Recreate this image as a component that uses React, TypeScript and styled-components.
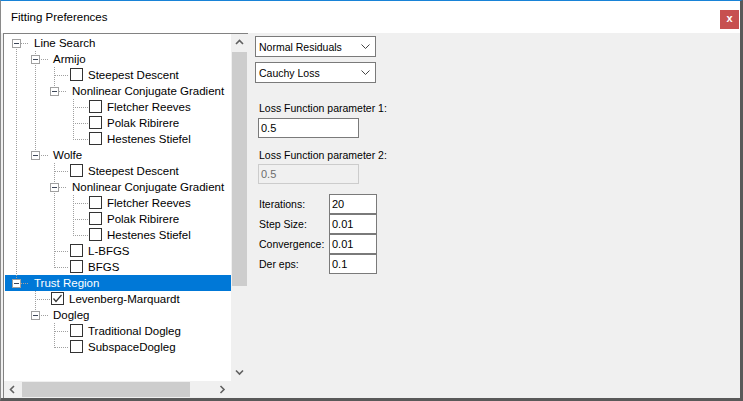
import React from "react";
import styled, { createGlobalStyle } from "styled-components";

const GlobalStyle = createGlobalStyle`
  html, body { margin: 0; padding: 0; background: #ffffff; }
  body { overflow: hidden; font-family: "Liberation Sans", Arial, sans-serif; }
`;

type TreeNode = {
  label: string;
  level: number;
  kind: "group" | "check";
  checked?: boolean;
  selected?: boolean;
};

const nodes: TreeNode[] = [
  { label: "Line Search", level: 0, kind: "group" },
  { label: "Armijo", level: 1, kind: "group" },
  { label: "Steepest Descent", level: 2, kind: "check" },
  { label: "Nonlinear Conjugate Gradient", level: 2, kind: "group" },
  { label: "Fletcher Reeves", level: 3, kind: "check" },
  { label: "Polak Ribirere", level: 3, kind: "check" },
  { label: "Hestenes Stiefel", level: 3, kind: "check" },
  { label: "Wolfe", level: 1, kind: "group" },
  { label: "Steepest Descent", level: 2, kind: "check" },
  { label: "Nonlinear Conjugate Gradient", level: 2, kind: "group" },
  { label: "Fletcher Reeves", level: 3, kind: "check" },
  { label: "Polak Ribirere", level: 3, kind: "check" },
  { label: "Hestenes Stiefel", level: 3, kind: "check" },
  { label: "L-BFGS", level: 2, kind: "check" },
  { label: "BFGS", level: 2, kind: "check" },
  { label: "Trust Region", level: 0, kind: "group", selected: true },
  { label: "Levenberg-Marquardt", level: 1, kind: "check", checked: true },
  { label: "Dogleg", level: 1, kind: "group" },
  { label: "Traditional Dogleg", level: 2, kind: "check" },
  { label: "SubspaceDogleg", level: 2, kind: "check" },
];

const ROW = 16;
const INDENT = 19;

const hasNext = nodes.map((n, i) => {
  for (let j = i + 1; j < nodes.length; j++) {
    if (nodes[j].level < n.level) return false;
    if (nodes[j].level === n.level) return true;
  }
  return false;
});

// dotted connector lines of the tree, one pixel per dot
function buildLines() {
  let d = "";
  const v = (x: number, y1: number, y2: number) => {
    for (let y = y1; y < y2; y++) if (y % 2 === 0) d += `M${x} ${y}h1v1h-1z`;
  };
  const h = (x1: number, x2: number, y: number) => {
    for (let x = x1; x < x2; x++) if (x % 2 === 0) d += `M${x} ${y}h1v1h-1z`;
  };
  nodes.forEach((n, i) => {
    const top = i * ROW;
    const mid = top + 8;
    const xc = 11 + INDENT * n.level;
    for (let k = 0; k < n.level; k++) {
      let a = i - 1;
      while (a >= 0 && nodes[a].level !== k) a--;
      if (a >= 0 && hasNext[a]) v(11 + INDENT * k, top, top + ROW);
    }
    if (n.kind === "group") {
      if (i > 0) v(xc, top, top + 4);
      if (hasNext[i]) v(xc, top + 13, top + ROW);
      h(xc + 5, xc + 13, mid);
    } else {
      v(xc, top, mid + 1);
      if (hasNext[i]) v(xc, mid, top + ROW);
      h(xc + 1, xc + 15, mid);
    }
  });
  return d;
}

const Window = styled.div`
  width: 743px;
  height: 401px;
  box-sizing: border-box;
  border-top: 1px solid #1883d7;
  border-left: 1px solid #8a8a8a;
  border-right: 3px solid #595959;
  border-bottom: 3px solid #595959;
  display: flex;
  flex-direction: column;
  background: #f0f0f0;
`;

const TitleBar = styled.div`
  height: 32px;
  flex: none;
  background: #ffffff;
  display: flex;
  align-items: center;
  justify-content: space-between;
  padding: 0 1px 0 10px;
`;

const Title = styled.span`
  font-size: 11.5px;
  color: #000000;
`;

const CloseButton = styled.div`
  align-self: flex-start;
  margin-top: 9px;
  width: 19px;
  height: 19px;
  background: #c75050;
  color: #ffffff;
  font-weight: bold;
  font-size: 11px;
  line-height: 17px;
  text-align: center;
`;

const Client = styled.div`
  flex: 1;
  display: flex;
  min-height: 0;
`;

const TreePanel = styled.div`
  margin-left: 2px;
  width: 245px;
  box-sizing: border-box;
  border-top: 1px solid #828282;
  border-left: 1px solid #828282;
  display: grid;
  grid-template-columns: 227px 17px;
  grid-template-rows: 347px 17px;
  background: #ffffff;
`;

const TreeContent = styled.div`
  position: relative;
  padding: 1px 0 0 1px;
  overflow: hidden;
  background: #ffffff;
`;

const Lines = styled.svg`
  position: absolute;
  left: 1px;
  top: 1px;
  pointer-events: none;
`;

const Row = styled.div<{ $indent: number; $selected?: boolean }>`
  height: ${ROW}px;
  display: flex;
  align-items: center;
  padding-left: ${(p) => p.$indent}px;
  background: ${(p) => (p.$selected ? "#0078d7" : "transparent")};
  color: ${(p) => (p.$selected ? "#ffffff" : "#000000")};
  font-size: 11.5px;
  white-space: nowrap;
`;

const Expander = styled.span`
  position: relative;
  align-self: flex-start;
  margin-top: 4px;
  margin-right: 13px;
  width: 9px;
  height: 9px;
  box-sizing: border-box;
  border: 1px solid #a0a0a0;
  background: #ffffff;
  flex: none;
  &::after {
    content: "";
    position: absolute;
    left: 1px;
    top: 3px;
    width: 5px;
    height: 1px;
    background: #3c4658;
  }
`;

const CheckBox = styled.span`
  align-self: flex-start;
  margin-top: 1px;
  margin-right: 5px;
  width: 13px;
  height: 13px;
  box-sizing: border-box;
  border: 1px solid #333333;
  background: #ffffff;
  flex: none;
  display: flex;
`;

const VScroll = styled.div`
  background: #f0f0f0;
  display: flex;
  flex-direction: column;
`;

const HScroll = styled.div`
  background: #f0f0f0;
  display: flex;
`;

const Corner = styled.div`
  background: #f0f0f0;
`;

const ScrollButton = styled.div`
  width: 17px;
  height: 17px;
  flex: none;
  display: flex;
  align-items: center;
  justify-content: center;
`;

const Spacer = styled.div`
  flex: 1;
`;

const VThumb = styled.div`
  margin: 1px 1px 0 1px;
  height: 234px;
  background: #cdcdcd;
`;

const HThumb = styled.div`
  margin: 1px 0 1px 1px;
  width: 168px;
  background: #cdcdcd;
`;

const RightPanel = styled.div`
  display: flex;
  flex-direction: column;
  align-items: flex-start;
  padding: 3px 0 0 7px;
  font-size: 10.5px;
  color: #000000;
`;

const Combo = styled.div<{ $mt: number }>`
  margin-top: ${(p) => p.$mt}px;
  width: 121px;
  height: 21px;
  box-sizing: border-box;
  border: 1px solid #7a7a7a;
  background: #ffffff;
  display: flex;
  align-items: center;
  justify-content: space-between;
  padding: 0 5px 0 3px;
`;

const Label = styled.div<{ $mt: number }>`
  margin-top: ${(p) => p.$mt}px;
  line-height: 13px;
  padding-left: 4px;
`;

const TextBox = styled.div<{ $mt?: number; $ml?: number; $width: number; $disabled?: boolean }>`
  margin-top: ${(p) => p.$mt ?? 0}px;
  margin-left: ${(p) => p.$ml ?? 0}px;
  width: ${(p) => p.$width}px;
  height: 20px;
  box-sizing: border-box;
  border: 1px solid ${(p) => (p.$disabled ? "#cccccc" : "#7a7a7a")};
  background: ${(p) => (p.$disabled ? "#f0f0f0" : "#ffffff")};
  color: ${(p) => (p.$disabled ? "#6d6d6d" : "#000000")};
  padding-left: 2px;
  display: flex;
  align-items: center;
  font-size: 11px;
`;

const ParamGrid = styled.div`
  margin-top: 10px;
  display: grid;
  grid-template-columns: 74px 48px;
  grid-auto-rows: 19px;
  row-gap: 1px;
`;

const GridLabel = styled.div`
  padding-left: 4px;
  display: flex;
  align-items: center;
`;

const Chevron = ({ dir }: { dir: "up" | "down" | "left" | "right" }) => {
  const pts = {
    up: "1,5 4.5,1.5 8,5",
    down: "1,1.5 4.5,5 8,1.5",
    left: "5,1 1.5,4.5 5,8",
    right: "1.5,1 5,4.5 1.5,8",
  }[dir];
  const vertical = dir === "up" || dir === "down";
  return (
    <svg width={vertical ? 9 : 7} height={vertical ? 7 : 9}>
      <polyline points={pts} fill="none" stroke="#606060" strokeWidth={1.6} />
    </svg>
  );
};

const ComboArrow = () => (
  <svg width="9" height="5">
    <polyline points="0.5,0.5 4.5,4.5 8.5,0.5" fill="none" stroke="#444444" strokeWidth={1} />
  </svg>
);

const CheckMark = () => (
  <svg width="11" height="11">
    <polyline points="1.5,5.5 4,8.5 9.5,2" fill="none" stroke="#333333" strokeWidth={1.2} />
  </svg>
);

export default function App() {
  const lines = buildLines();
  return (
    <>
      <GlobalStyle />
      <Window>
        <TitleBar>
          <Title>Fitting Preferences</Title>
          <CloseButton>x</CloseButton>
        </TitleBar>
        <Client>
          <TreePanel>
            <TreeContent>
              {nodes.map((n, i) => (
                <Row
                  key={i}
                  $indent={(n.kind === "group" ? 7 : 27) + INDENT * n.level}
                  $selected={n.selected}
                >
                  {n.kind === "group" ? (
                    <Expander />
                  ) : (
                    <CheckBox>{n.checked && <CheckMark />}</CheckBox>
                  )}
                  {n.label}
                </Row>
              ))}
              <Lines width={226} height={346}>
                <path d={lines} fill="#a0a0a0" />
              </Lines>
            </TreeContent>
            <VScroll>
              <ScrollButton>
                <Chevron dir="up" />
              </ScrollButton>
              <VThumb />
              <Spacer />
              <ScrollButton>
                <Chevron dir="down" />
              </ScrollButton>
            </VScroll>
            <HScroll>
              <ScrollButton>
                <Chevron dir="left" />
              </ScrollButton>
              <HThumb />
              <Spacer />
              <ScrollButton>
                <Chevron dir="right" />
              </ScrollButton>
            </HScroll>
            <Corner />
          </TreePanel>
          <RightPanel>
            <Combo $mt={0}>
              Normal Residuals
              <ComboArrow />
            </Combo>
            <Combo $mt={5}>
              Cauchy Loss
              <ComboArrow />
            </Combo>
            <Label $mt={19}>Loss Function parameter 1:</Label>
            <TextBox $mt={3} $ml={3} $width={101}>
              0.5
            </TextBox>
            <Label $mt={11}>Loss Function parameter 2:</Label>
            <TextBox $mt={2} $ml={3} $width={101} $disabled>
              0.5
            </TextBox>
            <ParamGrid>
              <GridLabel>Iterations:</GridLabel>
              <TextBox $width={48}>20</TextBox>
              <GridLabel>Step Size:</GridLabel>
              <TextBox $width={48}>0.01</TextBox>
              <GridLabel>Convergence:</GridLabel>
              <TextBox $width={48}>0.01</TextBox>
              <GridLabel>Der eps:</GridLabel>
              <TextBox $width={48}>0.1</TextBox>
            </ParamGrid>
          </RightPanel>
        </Client>
      </Window>
    </>
  );
}
